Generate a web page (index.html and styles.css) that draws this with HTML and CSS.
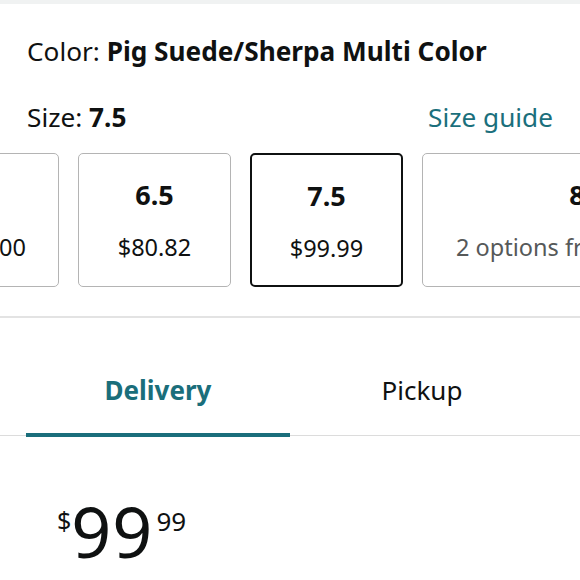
FILE: index.html
```html
<!DOCTYPE html>
<html>
<head>
<meta charset="utf-8">
<link rel="stylesheet" href="styles.css">
</head>
<body>
<div class="topstrip"></div>
<div class="color-line">Color: <b>Pig Suede/Sherpa Multi Color</b></div>
<div class="size-row">
  <div class="size-label">Size: <b>7.5</b></div>
  <div class="size-guide">Size guide</div>
</div>
<div class="cards-viewport">
  <div class="cards">
    <div class="card"><div class="c-size">6</div><div class="c-price">$100.00</div></div>
    <div class="card"><div class="c-size">6.5</div><div class="c-price">$80.82</div></div>
    <div class="card selected"><div class="c-size">7.5</div><div class="c-price">$99.99</div></div>
    <div class="card wide"><div class="c-size">8</div><div class="c-price muted">2 options from $89.99</div></div>
  </div>
</div>
<div class="divider"></div>
<div class="tabs">
  <div class="tab active">Delivery</div>
  <div class="tab">Pickup</div>
</div>
<div class="price">
  <span class="p-sym">$</span><span class="p-whole">99</span><span class="p-frac">99</span>
</div>
</body>
</html>
```
FILE: styles.css
```css
html, body {
  margin: 0;
  padding: 0;
  background: #fff;
}
body {
  font-family: "Noto Sans", "Open Sans", sans-serif;
  color: #0f1111;
  width: 580px;
  height: 580px;
  overflow: hidden;
}
.topstrip {
  height: 4px;
  background: #f0f2f2;
}
.color-line {
  font-size: 26.2px;
  line-height: 36px;
  padding: 29px 27px 0;
}
.color-line b, .size-label b {
  font-weight: 700;
}
.size-row {
  display: flex;
  justify-content: space-between;
  align-items: baseline;
  font-size: 26.2px;
  line-height: 36px;
  padding: 30px 27px 0;
}
.size-guide {
  color: #1b6f7c;
}
.cards-viewport {
  overflow: hidden;
  margin-top: 18px;
}
.cards {
  display: flex;
  gap: 19px;
  margin-left: -94px;
}
.card {
  flex: 0 0 auto;
  width: 153px;
  height: 134px;
  box-sizing: border-box;
  border: 1.5px solid #b4b4b4;
  border-radius: 5px;
  display: flex;
  flex-direction: column;
  align-items: center;
  white-space: nowrap;
}
.card.selected {
  border: 2.5px solid #0f1111;
}
.card.wide {
  width: auto;
  padding: 0 33px;
}
.c-size {
  font-size: 27px;
  font-weight: 700;
  line-height: 34px;
  margin-top: 24px;
}
.c-price {
  font-size: 23.5px;
  line-height: 32px;
  margin-top: 19px;
}
.c-price.muted {
  color: #565959;
}
.divider {
  height: 2px;
  background: #e3e3e3;
  margin-top: 29px;
}
.tabs {
  display: flex;
  padding: 0 26px;
  border-bottom: 1.5px solid #dcdcdc;
}
.tab {
  flex: 1;
  text-align: center;
  font-size: 26px;
  line-height: 36px;
  padding: 54px 0 25px;
  border-bottom: 4px solid transparent;
  margin-bottom: -2px;
}
.tab.active {
  color: #1a6e7b;
  font-weight: 700;
  border-bottom-color: #1a6e7b;
}
.price {
  padding: 70px 57px 0;
  display: flex;
  align-items: flex-start;
  line-height: 1;
}
.p-sym {
  font-size: 25px;
  margin-top: 2px;
}
.p-whole {
  font-size: 70px;
  margin-top: -10px;
  letter-spacing: 1px;
}
.p-frac {
  font-size: 26px;
  margin-left: 3px;
  margin-top: 2px;
}
```
